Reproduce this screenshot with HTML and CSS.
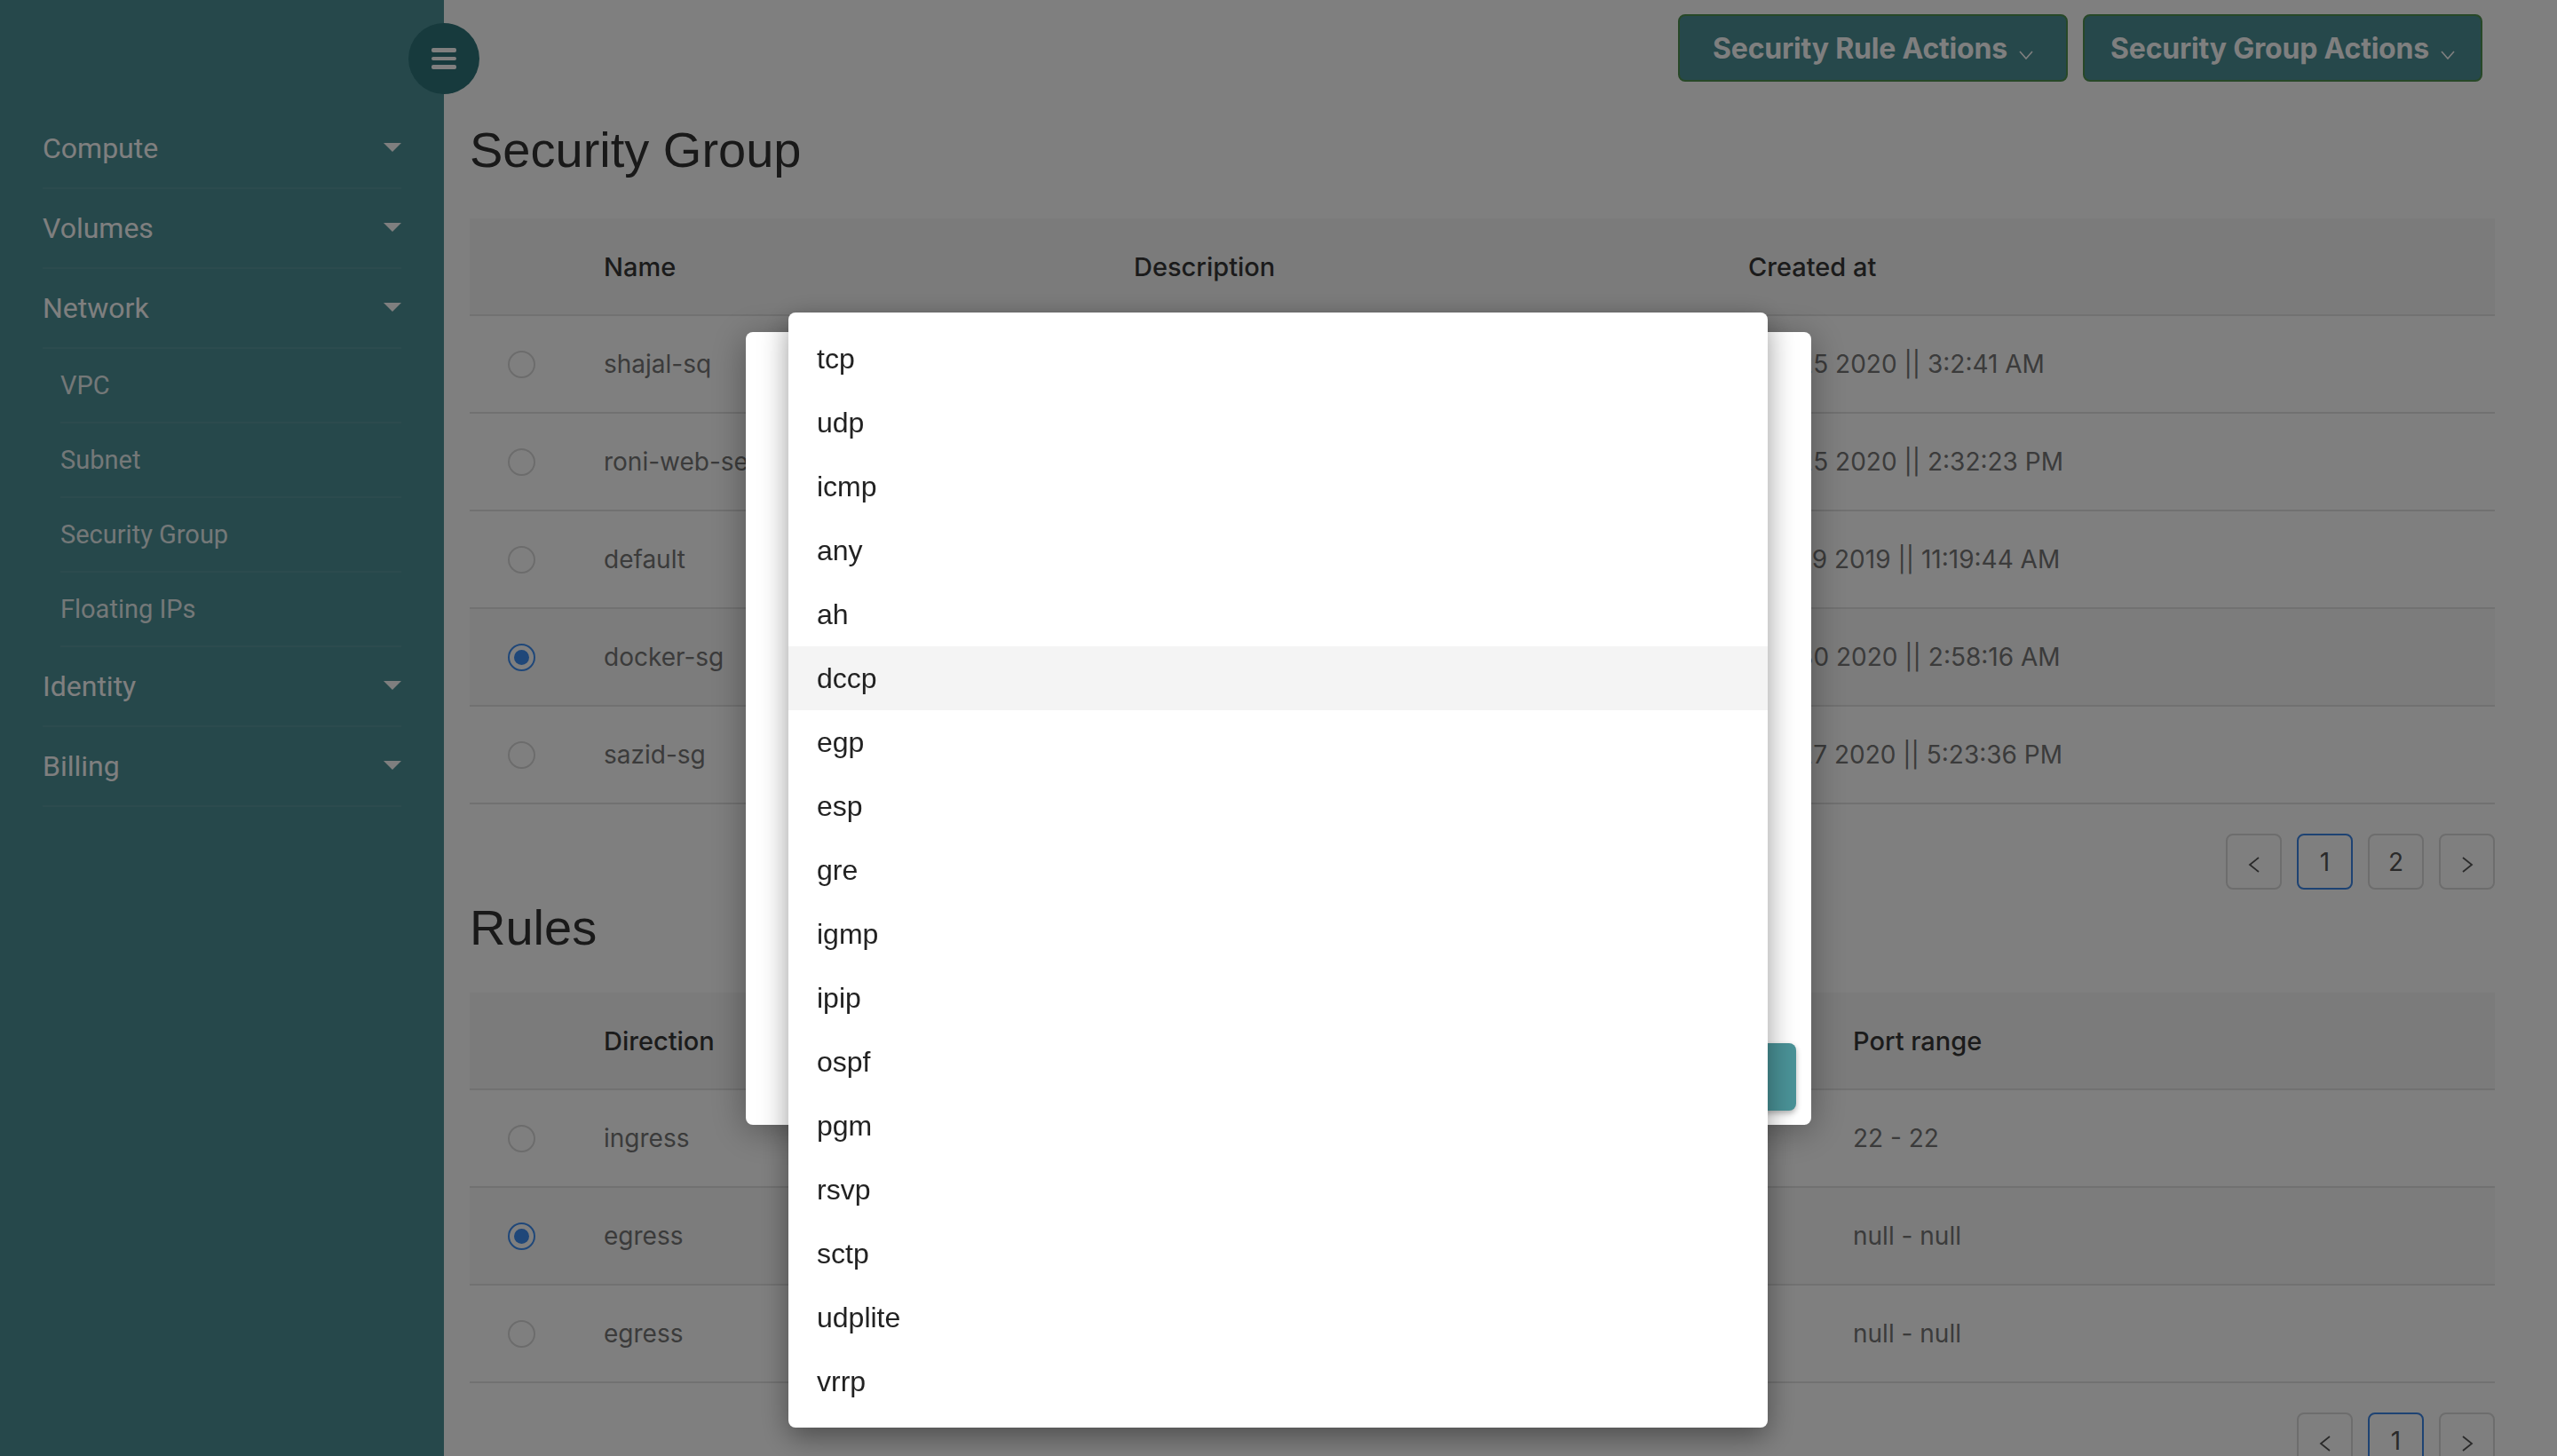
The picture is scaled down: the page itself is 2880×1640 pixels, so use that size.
FILE: index.html
```html
<!DOCTYPE html>
<html lang="en">
<head>
<meta charset="utf-8">
<title>Security Group</title>
<link rel="stylesheet" href="styles.css">
</head>
<body>
<div class="app">
  <aside class="sidebar">
    <button class="burger" aria-label="menu"><span></span><span></span><span></span></button>
    <nav class="nav">
      <div class="nav-item"><span>Compute</span><i class="caret"></i></div>
      <div class="nav-item"><span>Volumes</span><i class="caret"></i></div>
      <div class="nav-item"><span>Network</span><i class="caret"></i></div>
      <div class="sub-item">VPC</div>
      <div class="sub-item">Subnet</div>
      <div class="sub-item">Security Group</div>
      <div class="sub-item">Floating IPs</div>
      <div class="nav-item"><span>Identity</span><i class="caret"></i></div>
      <div class="nav-item"><span>Billing</span><i class="caret"></i></div>
    </nav>
  </aside>

  <main class="main">
    <div class="toolbar">
      <button class="action wide">Security Rule Actions<svg class="chev" width="16" height="10" viewBox="0 0 16 10"><polyline points="1,1 8,9 15,1" fill="none" stroke="currentColor" stroke-width="1.6"/></svg></button>
      <button class="action">Security Group Actions<svg class="chev" width="16" height="10" viewBox="0 0 16 10"><polyline points="1,1 8,9 15,1" fill="none" stroke="currentColor" stroke-width="1.6"/></svg></button>
    </div>

    <h1 class="title">Security Group</h1>
    <div class="table">
      <div class="row head">
        <div class="c-sel"></div>
        <div class="c-name">Name</div>
        <div class="c-desc">Description</div>
        <div class="c-date">Created at</div>
      </div>
      <div class="row">
        <div class="c-sel"><span class="radio"></span></div>
        <div class="c-name">shajal-sq</div>
        <div class="c-desc"></div>
        <div class="c-date">Jan 25 2020 || 3:2:41 AM</div>
      </div>
      <div class="row">
        <div class="c-sel"><span class="radio"></span></div>
        <div class="c-name">roni-web-sec</div>
        <div class="c-desc"></div>
        <div class="c-date">Jan 25 2020 || 2:32:23 PM</div>
      </div>
      <div class="row">
        <div class="c-sel"><span class="radio"></span></div>
        <div class="c-name">default</div>
        <div class="c-desc"></div>
        <div class="c-date">Dec 19 2019 || 11:19:44 AM</div>
      </div>
      <div class="row selected">
        <div class="c-sel"><span class="radio on"></span></div>
        <div class="c-name">docker-sg</div>
        <div class="c-desc"></div>
        <div class="c-date">Jan 30 2020 || 2:58:16 AM</div>
      </div>
      <div class="row">
        <div class="c-sel"><span class="radio"></span></div>
        <div class="c-name">sazid-sg</div>
        <div class="c-desc"></div>
        <div class="c-date">Jan 27 2020 || 5:23:36 PM</div>
      </div>
    </div>
    <div class="pager">
      <button class="pg"><svg width="14" height="18" viewBox="0 0 14 18"><polyline points="12,1 2,9 12,17" fill="none" stroke="currentColor" stroke-width="1.8"/></svg></button>
      <button class="pg active">1</button>
      <button class="pg">2</button>
      <button class="pg"><svg width="14" height="18" viewBox="0 0 14 18"><polyline points="2,1 12,9 2,17" fill="none" stroke="currentColor" stroke-width="1.8"/></svg></button>
    </div>

    <h1 class="title rules-title">Rules</h1>
    <div class="table">
      <div class="row head">
        <div class="c-sel"></div>
        <div class="c-dir">Direction</div>
        <div class="c-mid"></div>
        <div class="c-port">Port range</div>
      </div>
      <div class="row">
        <div class="c-sel"><span class="radio"></span></div>
        <div class="c-dir">ingress</div>
        <div class="c-mid"></div>
        <div class="c-port">22 - 22</div>
      </div>
      <div class="row selected">
        <div class="c-sel"><span class="radio on"></span></div>
        <div class="c-dir">egress</div>
        <div class="c-mid"></div>
        <div class="c-port">null - null</div>
      </div>
      <div class="row">
        <div class="c-sel"><span class="radio"></span></div>
        <div class="c-dir">egress</div>
        <div class="c-mid"></div>
        <div class="c-port">null - null</div>
      </div>
    </div>
    <div class="pager">
      <button class="pg"><svg width="14" height="18" viewBox="0 0 14 18"><polyline points="12,1 2,9 12,17" fill="none" stroke="currentColor" stroke-width="1.8"/></svg></button>
      <button class="pg active">1</button>
      <button class="pg"><svg width="14" height="18" viewBox="0 0 14 18"><polyline points="2,1 12,9 2,17" fill="none" stroke="currentColor" stroke-width="1.8"/></svg></button>
    </div>
  </main>
</div>

<div class="overlay">
  <div class="modal">
    <div class="modal-body"></div>
    <div class="modal-foot">
      <button class="btn-primary" aria-label="Add rule"></button>
    </div>
  </div>
</div>

<ul class="menu">
  <li>tcp</li>
  <li>udp</li>
  <li>icmp</li>
  <li>any</li>
  <li>ah</li>
  <li class="hl">dccp</li>
  <li>egp</li>
  <li>esp</li>
  <li>gre</li>
  <li>igmp</li>
  <li>ipip</li>
  <li>ospf</li>
  <li>pgm</li>
  <li>rsvp</li>
  <li>sctp</li>
  <li>udplite</li>
  <li>vrrp</li>
</ul>
</body>
</html>
```

FILE: styles.css
```css
* { box-sizing: border-box; }

html, body {
  margin: 0;
  padding: 0;
  width: 2880px;
  height: 1640px;
  overflow: hidden;
  background: #ffffff;
  font-family: "Inter", "Roboto", sans-serif;
}

.app {
  display: flex;
  width: 2880px;
  height: 1640px;
}

/* ---------- sidebar ---------- */
.sidebar {
  position: relative;
  width: 500px;
  flex: 0 0 500px;
  height: 1640px;
  background: #4c9096;
  font-family: "Roboto", sans-serif;
}

.burger {
  position: absolute;
  top: 26px;
  right: -40px;
  width: 80px;
  height: 80px;
  border: 0;
  border-radius: 50%;
  background: #2e747a;
  padding: 0;
  display: flex;
  flex-direction: column;
  align-items: center;
  justify-content: center;
  gap: 5px;
}
.burger span {
  display: block;
  width: 28px;
  height: 4.5px;
  border-radius: 2px;
  background: #ffffff;
}

.nav {
  padding-top: 123px;
  margin: 0 48px;
}

.nav-item {
  height: 90px;
  display: flex;
  align-items: center;
  justify-content: space-between;
  border-bottom: 2px solid rgba(255, 255, 255, 0.07);
  font-size: 32px;
  color: #ffffff;
}

.caret {
  width: 0;
  height: 0;
  border-left: 10px solid transparent;
  border-right: 10px solid transparent;
  border-top: 10px solid #ffffff;
  margin-top: -2px;
}

.sub-item {
  height: 84px;
  margin-left: 20px;
  display: flex;
  align-items: center;
  border-bottom: 2px solid rgba(255, 255, 255, 0.07);
  font-size: 29px;
  color: rgba(255, 255, 255, 0.88);
}

/* ---------- main ---------- */
.main {
  flex: 1;
  padding: 16px 70px 0 29px;
}

.toolbar {
  display: flex;
  justify-content: flex-end;
  gap: 17px;
  padding-right: 14px;
}

.action {
  height: 76px;
  display: flex;
  align-items: center;
  justify-content: center;
  padding: 0 29px;
  background: #4c9096;
  border: 2px solid #4f9150;
  border-radius: 8px;
  color: #ffffff;
  font-family: "Inter", sans-serif;
  font-weight: 700;
  font-size: 32px;
  letter-spacing: -0.2px;
}
.action.wide {
  width: 439px;
}
.chev {
  margin-left: 13px;
  margin-top: 16px;
}

.title {
  margin: 45px 0 45px;
  font-family: "Liberation Sans", Arial, sans-serif;
  font-weight: 400;
  font-size: 56px;
  line-height: 64px;
  color: #333333;
}
.rules-title {
  margin: 11px 0 41px;
}

.table {
  width: 100%;
}

.row {
  display: flex;
  align-items: center;
  height: 110px;
  border-bottom: 2px solid #e2e2e2;
  font-size: 28px;
  color: #767676;
}
.row.head {
  background: #f6f6f6;
  color: #363636;
  font-weight: 500;
  font-size: 29px;
}
.row.selected {
  background: #f8f8f8;
}

.c-sel {
  width: 151px;
  flex: 0 0 151px;
  padding-left: 43px;
  display: flex;
  align-items: center;
}
.c-name { width: 597px; flex: 0 0 597px; white-space: nowrap; }
.c-desc { width: 692px; flex: 0 0 692px; white-space: nowrap; }
.c-date { flex: 1; white-space: nowrap; }

.c-dir { width: 420px; flex: 0 0 420px; }
.c-mid { width: 987px; flex: 0 0 987px; }
.c-port { flex: 1; }

.radio {
  width: 31px;
  height: 31px;
  border-radius: 50%;
  border: 2px solid #d9d9d9;
  background: #ffffff;
  display: flex;
  align-items: center;
  justify-content: center;
}
.radio.on {
  border-color: #3e8ef2;
}
.radio.on::after {
  content: "";
  width: 17px;
  height: 17px;
  border-radius: 50%;
  background: #3e8ef2;
}

.pager {
  display: flex;
  justify-content: flex-end;
  gap: 17px;
  margin-top: 33px;
}
.pg {
  width: 63px;
  height: 63px;
  border: 2px solid #dadada;
  border-radius: 8px;
  background: transparent;
  color: #555555;
  font-family: "Inter", sans-serif;
  font-size: 28px;
  display: flex;
  align-items: center;
  justify-content: center;
  padding: 0;
}
.pg svg { margin-top: 6px; }
.pg.active {
  border-color: #3d86e6;
}

/* ---------- modal ---------- */
.overlay {
  position: fixed;
  inset: 0;
  background: rgba(0, 0, 0, 0.5);
  display: flex;
  align-items: center;
  justify-content: center;
}

.modal {
  width: 1200px;
  height: 893px;
  background: #ffffff;
  border-radius: 8px;
  box-shadow: 0 6px 40px rgba(0, 0, 0, 0.35);
  display: flex;
  flex-direction: column;
}
.modal-body {
  flex: 1;
}
.modal-foot {
  display: flex;
  justify-content: flex-end;
  padding: 0 17px 16px;
}
.btn-primary {
  width: 240px;
  height: 76px;
  border: 0;
  border-radius: 8px;
  background: #4a9297;
  box-shadow: 0 3px 6px rgba(0, 0, 0, 0.3);
}

/* ---------- select menu ---------- */
.menu {
  position: fixed;
  left: 888px;
  top: 352px;
  width: 1103px;
  margin: 0;
  padding: 16px 0;
  list-style: none;
  background: #ffffff;
  border-radius: 8px;
  box-shadow: 0 10px 32px rgba(0, 0, 0, 0.4);
  font-family: "Liberation Sans", Arial, sans-serif;
  font-size: 32px;
  color: #222222;
}
.menu li {
  height: 72px;
  display: flex;
  align-items: center;
  padding-left: 32px;
}
.menu li.hl {
  background: #f4f4f4;
}
```
